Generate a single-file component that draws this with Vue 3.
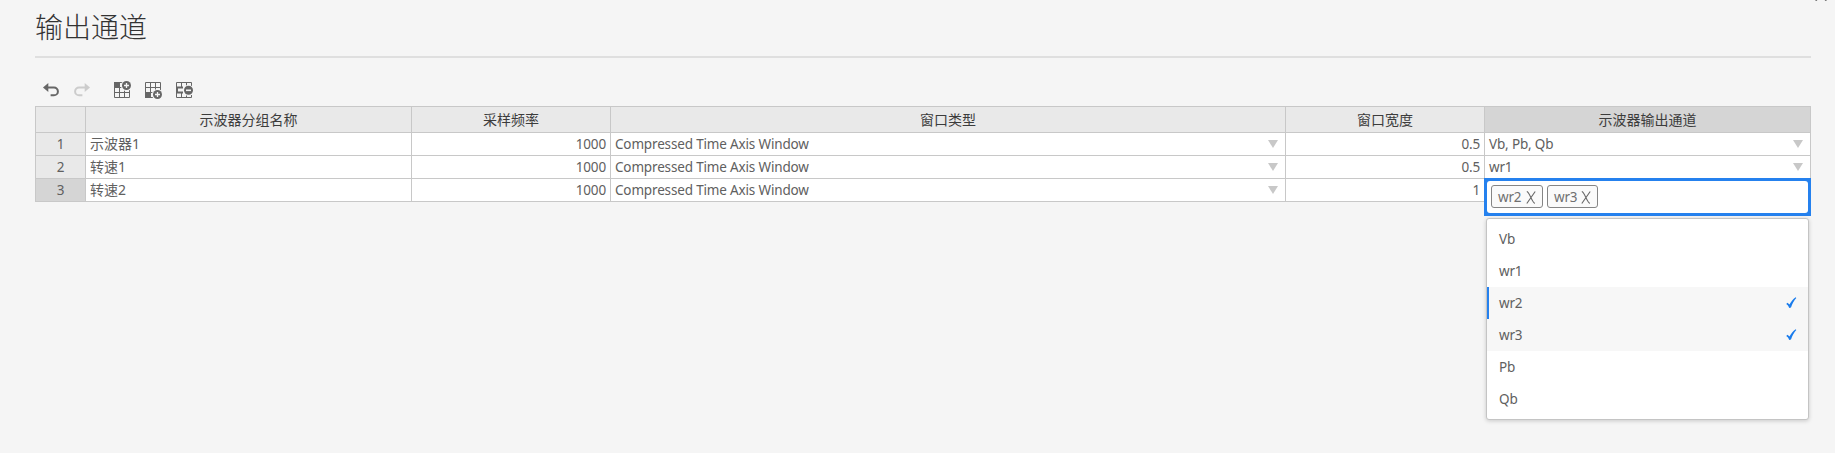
<script setup>
const columns = ['示波器分组名称', '采样频率', '窗口类型', '窗口宽度', '示波器输出通道']
const rows = [
  { name: '示波器1', rate: '1000', type: 'Compressed Time Axis Window', width: '0.5', out: 'Vb, Pb, Qb' },
  { name: '转速1', rate: '1000', type: 'Compressed Time Axis Window', width: '0.5', out: 'wr1' },
  { name: '转速2', rate: '1000', type: 'Compressed Time Axis Window', width: '1', out: '' },
]
const selected = ['wr2', 'wr3']
const options = ['Vb', 'wr1', 'wr2', 'wr3', 'Pb', 'Qb']
</script>

<template>
  <div class="page">
    <div class="close">
      <svg width="12" height="12" viewBox="0 0 12 12"><path d="M0.5 11.5L11.5 0.5M0.5 0.5L11.5 11.5" fill="none" stroke="#666" stroke-width="2" /></svg>
    </div>
    <h1>输出通道</h1>
    <div class="toolbar">
      <svg class="undo" width="17" height="14" viewBox="0 0 17 14"><path d="M3.2 4.5H11a3.9 3.9 0 0 1 0 7.8H7.6" fill="none" stroke="#666" stroke-width="2" /><path d="M0 4.5L5.3 0V9z" fill="#666" /></svg>
      <svg class="redo" width="17" height="14" viewBox="0 0 17 14"><path d="M13.8 4.5H6a3.9 3.9 0 0 0 0 7.8H9.4" fill="none" stroke="#ccc" stroke-width="2" /><path d="M17 4.5L11.7 0V9z" fill="#ccc" /></svg>
      <svg class="tool" width="18" height="18" viewBox="0 0 18 18">
        <path d="M.5 1.5V16.5H15.5V1.5H.5M5.5 1.5V16.5M10.5 1.5V16.5M.5 6.5H15.5M.5 11.5H15.5" fill="none" stroke="#666" />
        <path d="M0 1h6v6H0z" fill="#666" />
        <circle cx="12.5" cy="4.5" r="5.5" fill="#f5f5f5" /><circle cx="12.5" cy="4.5" r="4.5" fill="#666" />
        <path d="M10 4.5h5M12.5 2v5" stroke="#f5f5f5" stroke-width="1.3" />
      </svg>
      <svg class="tool" width="18" height="18" viewBox="0 0 18 18">
        <path d="M.5 1.5V16.5H15.5V1.5H.5M5.5 1.5V16.5M10.5 1.5V16.5M.5 6.5H15.5M.5 11.5H15.5" fill="none" stroke="#666" />
        <path d="M0 11h6v6H0z" fill="#666" />
        <circle cx="12.5" cy="13.5" r="5.5" fill="#f5f5f5" /><circle cx="12.5" cy="13.5" r="4.5" fill="#666" />
        <path d="M10 13.5h5M12.5 11v5" stroke="#f5f5f5" stroke-width="1.3" />
      </svg>
      <svg class="tool" width="18" height="18" viewBox="0 0 18 18">
        <path d="M.5 6V1.5H15.5V6M5.5 1V6M10.5 1V6M.5 12V16.5H15.5V12M5.5 12V17M10.5 12V17" fill="none" stroke="#666" />
        <path d="M7 6.5H1V11.5H7" fill="none" stroke="#666" stroke-width="2" />
        <circle cx="12.5" cy="9.3" r="5.5" fill="#f5f5f5" /><circle cx="12.5" cy="9.3" r="4.5" fill="#666" />
        <path d="M10 9.3h5" stroke="#f5f5f5" stroke-width="1.6" />
      </svg>
    </div>
    <div class="grid">
      <div class="row head">
        <div class="cell"></div>
        <div v-for="(c, i) in columns" :key="c" class="cell" :class="{ current: i === 4 }">{{ c }}</div>
      </div>
      <div v-for="(r, i) in rows" :key="i" class="row">
        <div class="cell index" :class="{ current: i === 2 }">{{ i + 1 }}</div>
        <div class="cell name">{{ r.name }}</div>
        <div class="cell num">{{ r.rate }}</div>
        <div class="cell pick"><span>{{ r.type }}</span><i class="arrow"></i></div>
        <div class="cell num">{{ r.width }}</div>
        <div class="cell pick">
          <template v-if="i < 2"><span>{{ r.out }}</span><i class="arrow"></i></template>
          <div v-else class="overlay">
            <div class="editor"><div class="inner">
              <span v-for="s in selected" :key="s" class="tag">{{ s }}
                <svg width="10" height="13" viewBox="0 0 10 13"><path d="M.8 .5C3.6 1 6.2 12 9 12.3M9.2 .5L.8 12.5" fill="none" stroke="#666" stroke-width="1.1" /></svg>
              </span>
            </div></div>
            <div class="menu">
              <div v-for="o in options" :key="o" class="option" :class="{ on: selected.includes(o), focus: o === 'wr2' }">
                <span>{{ o }}</span>
                <svg v-if="selected.includes(o)" width="11" height="12" viewBox="0 0 11 12"><path d="M.2 7L1.5 5.8 3.5 7.6C5 4.6 7 2 9.6.3L10.3 1C8 3.6 6.3 6.8 5 10.6L3.2 11C2.6 9.2 1.6 7.8.2 7z" fill="#1a7cec" /></svg>
              </div>
            </div>
          </div>
        </div>
      </div>
    </div>
  </div>
</template>

<style>
body { background: #f5f5f5; }
</style>

<style scoped>
.page { box-sizing: border-box; position: relative; width: 1835px; height: 453px; padding: 0 24px 0 35px; overflow: hidden; background: #f5f5f5; color: #606060; font: 13.5px/20px "Noto Sans", "Noto Sans CJK SC", sans-serif; letter-spacing: -0.16px; }
.close { position: absolute; left: 1815px; top: -11px; line-height: 0; }
h1 { box-sizing: border-box; height: 58px; margin: 0; padding-top: 6px; border-bottom: 2px solid #dfdfdf; color: #333; font: 300 28px/40px "Noto Sans CJK SC Light", "Noto Sans CJK SC DemiLight", "Noto Sans CJK SC", sans-serif; letter-spacing: 0; }
.toolbar { box-sizing: border-box; display: flex; height: 48px; padding: 23px 0 0 8px; }
.undo { margin: 2px 14px 0 0; }
.redo { margin: 2px 22px 0 -1px; }
.tool { margin: 0 13px 0 2px; }
.tool + .tool { margin-left: 0; }
.grid { border-top: 1px solid #c8c8c8; border-left: 1px solid #c8c8c8; }
.row { display: grid; grid-template-columns: 50px 326px 199px 675px 199px 326px; grid-template-rows: 100%; height: 23px; background: #fff; }
.cell { box-sizing: border-box; position: relative; height: 100%; padding: 0 4px; border-right: 1px solid #c8c8c8; border-bottom: 1px solid #c8c8c8; line-height: 23px; white-space: nowrap; }
.head { height: 26px; background: #e9e9e9; color: #3c3c3c; font-size: 14px; letter-spacing: 0; }
.head .cell { line-height: 25px; text-align: center; }
.index { background: #e9e9e9; text-align: center; }
.name { font-size: 14px; line-height: 22px; letter-spacing: 0; }
.cell.current { background: #d5d5d5; }
.num { text-align: right; }
.pick { display: flex; justify-content: space-between; padding-right: 7px; }
.arrow { width: 0; height: 0; margin-top: 7px; border: 5px solid transparent; border-top: 8px solid #c8c8c8; border-bottom: 0; }
.overlay { position: absolute; z-index: 2; left: -1px; top: -1px; width: 327px; }
.editor { box-sizing: border-box; height: 38px; background: #2581ee; padding: 3px; }
.inner { box-sizing: border-box; display: flex; gap: 4px; height: 32px; padding: 4px; border-radius: 3px; background: #fff; }
.tag { box-sizing: border-box; display: flex; justify-content: space-between; align-items: center; width: 52px; height: 23px; padding: 1px 6px 0; border: 1px solid #858585; border-radius: 3px; background: #fafafa; color: #707070; }
.tag svg { flex-shrink: 0; }
.tag + .tag { width: 51px; }
.menu { box-sizing: border-box; width: 323px; margin: 2px 0 0 2px; padding: 4px 0; border: 1px solid #c4c4c4; border-radius: 3px; background: #fff; box-shadow: 0 1px 4px rgba(0, 0, 0, .18); }
.option { box-sizing: border-box; display: flex; align-items: center; justify-content: space-between; height: 32px; padding: 0 11px 0 12px; line-height: 32px; }
.on { background: #f7f7f7; }
.focus { padding-left: 10px; border-left: 2px solid #2581ee; }
</style>
